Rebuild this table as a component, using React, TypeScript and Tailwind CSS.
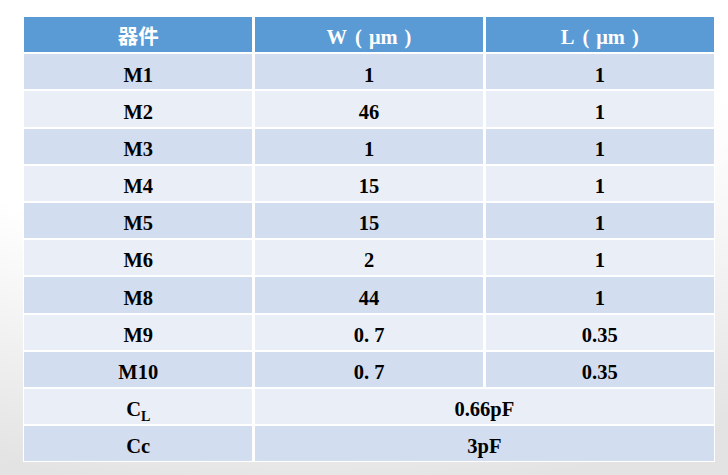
import React from "react";

const font = { fontFamily: '"Liberation Serif", "Noto Sans CJK SC", serif' };

type Row = { name: React.ReactNode; w?: string; l?: string; span?: string };

const rows: Row[] = [
  { name: "M1", w: "1", l: "1" },
  { name: "M2", w: "46", l: "1" },
  { name: "M3", w: "1", l: "1" },
  { name: "M4", w: "15", l: "1" },
  { name: "M5", w: "15", l: "1" },
  { name: "M6", w: "2", l: "1" },
  { name: "M8", w: "44", l: "1" },
  { name: "M9", w: "0. 7", l: "0.35" },
  { name: "M10", w: "0. 7", l: "0.35" },
  {
    name: (
      <span>
        C<span className="relative top-[5px] text-[14px]">L</span>
      </span>
    ),
    span: "0.66pF",
  },
  { name: "Cc", span: "3pF" },
];

const cell = "flex items-center justify-center h-[35.2px] pt-[6px] text-[20.5px] font-bold leading-none";

function Unit({ letter }: { letter: string }) {
  return (
    <span>
      {letter}
      <span className="ml-[8px]">(</span>
      <span className="mx-[7px]">μm</span>)
    </span>
  );
}

export default function App() {
  return (
    <div
      className="w-[728px] h-[475px] overflow-hidden bg-[radial-gradient(ellipse_110%_105%_at_42%_0%,#ffffff_55%,#e3e3e3_100%)] pt-[16px] pl-[23px]"
      style={font}
    >
      <div className="w-[692px] bg-white p-px grid grid-cols-3 gap-x-[2.3px] gap-y-[2px]">
        <div className={`${cell} bg-[#5b9bd5] text-white`}>器件</div>
        <div className={`${cell} bg-[#5b9bd5] text-white`}>
          <Unit letter="W" />
        </div>
        <div className={`${cell} bg-[#5b9bd5] text-white`}>
          <Unit letter="L" />
        </div>
        {rows.map((r, i) => {
          const bg = i % 2 === 0 ? "bg-[#d2deef]" : "bg-[#eaeff7]";
          return (
            <React.Fragment key={i}>
              <div className={`${cell} ${bg} text-black`}>{r.name}</div>
              {r.span ? (
                <div className={`${cell} ${bg} text-black col-span-2`}>{r.span}</div>
              ) : (
                <>
                  <div className={`${cell} ${bg} text-black`}>{r.w}</div>
                  <div className={`${cell} ${bg} text-black`}>{r.l}</div>
                </>
              )}
            </React.Fragment>
          );
        })}
      </div>
    </div>
  );
}
